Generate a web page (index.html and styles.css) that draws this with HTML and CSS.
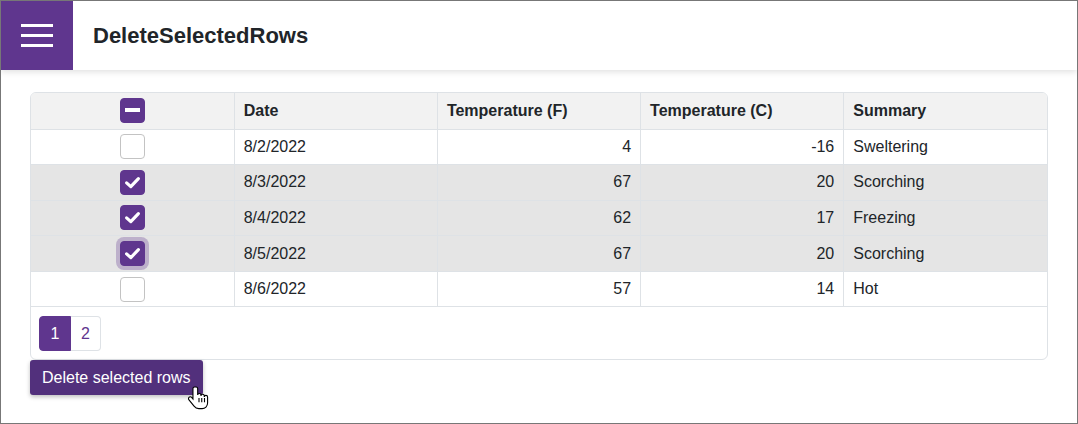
FILE: index.html
```html
<!DOCTYPE html>
<html>
<head>
<meta charset="utf-8">
<link rel="stylesheet" href="styles.css">
</head>
<body>
<div class="frame">
  <header class="topbar">
    <div class="menu-btn">
      <span class="bar"></span><span class="bar"></span><span class="bar"></span>
    </div>
    <h1 class="title">DeleteSelectedRows</h1>
  </header>
  <main class="content">
    <div class="grid">
      <table class="tbl">
        <colgroup><col><col><col><col><col></colgroup>
        <thead>
          <tr>
            <th class="c-sel"><span class="cb cb-on"><span class="dash"></span></span></th>
            <th>Date</th>
            <th>Temperature (F)</th>
            <th>Temperature (C)</th>
            <th>Summary</th>
          </tr>
        </thead>
        <tbody>
          <tr>
            <td class="c-sel"><span class="cb"></span></td>
            <td>8/2/2022</td><td class="num">4</td><td class="num">-16</td><td>Sweltering</td>
          </tr>
          <tr class="sel">
            <td class="c-sel"><span class="cb cb-on"><svg class="tick" viewBox="0 0 16 16"><path d="M3.5 8.3 L6.7 11.2 L12.5 5" /></svg></span></td>
            <td>8/3/2022</td><td class="num">67</td><td class="num">20</td><td>Scorching</td>
          </tr>
          <tr class="sel">
            <td class="c-sel"><span class="cb cb-on"><svg class="tick" viewBox="0 0 16 16"><path d="M3.5 8.3 L6.7 11.2 L12.5 5" /></svg></span></td>
            <td>8/4/2022</td><td class="num">62</td><td class="num">17</td><td>Freezing</td>
          </tr>
          <tr class="sel">
            <td class="c-sel"><span class="cb cb-on cb-focus"><svg class="tick" viewBox="0 0 16 16"><path d="M3.5 8.3 L6.7 11.2 L12.5 5" /></svg></span></td>
            <td>8/5/2022</td><td class="num">67</td><td class="num">20</td><td>Scorching</td>
          </tr>
          <tr>
            <td class="c-sel"><span class="cb"></span></td>
            <td>8/6/2022</td><td class="num">57</td><td class="num">14</td><td>Hot</td>
          </tr>
        </tbody>
      </table>
      <div class="pager">
        <span class="page active">1</span><span class="page">2</span>
      </div>
    </div>
    <div class="actions">
      <button class="del-btn">Delete selected rows</button>
      <svg class="cursor" viewBox="0 0 20 24" width="22" height="27">
        <path d="M6 1.5c-.9 0-1.5.7-1.5 1.5v9.5L3.3 11c-.7-.7-1.8-.7-2.4 0-.6.6-.6 1.5 0 2.2l4.6 5.8c1 1.3 2.5 2.2 4.3 2.2h3c2.8 0 5-2.2 5-5v-5.5c0-.8-.7-1.5-1.5-1.5s-1.5.7-1.5 1.5v-1c0-.8-.7-1.5-1.5-1.5s-1.5.7-1.5 1.5v-.8c0-.8-.7-1.5-1.5-1.5s-1.5.7-1.5 1.5V3c0-.8-.6-1.5-1.5-1.5z" fill="#fff" stroke="#000" stroke-width="1"/>
        <path d="M10 11.5v4M12.5 11.5v4M15 11.5v4" stroke="#000" stroke-width="1" fill="none"/>
      </svg>
    </div>
  </main>
</div>
</body>
</html>
```

FILE: styles.css
```css
* { box-sizing: border-box; }
html, body { margin: 0; padding: 0; background: #fff; }
body { font-family: "Liberation Sans", Arial, sans-serif; color: #212529; }

.frame {
  width: 1078px;
  height: 424px;
  border: 1px solid #777;
  overflow: hidden;
  background: #fff;
}

.topbar {
  height: 69px;
  display: flex;
  align-items: center;
  background: #fff;
  box-shadow: 0 2px 6px rgba(0,0,0,0.12);
  position: relative;
  z-index: 1;
}
.menu-btn {
  width: 72px;
  height: 69px;
  background: #5f368e;
  display: flex;
  flex-direction: column;
  justify-content: center;
  align-items: center;
  gap: 7px;
}
.menu-btn .bar {
  display: block;
  width: 32px;
  height: 3px;
  background: #fff;
}
.title {
  margin: 0 0 0 20px;
  font-size: 22px;
  font-weight: bold;
  color: #212529;
}

.content {
  padding: 22px 29px 0 29px;
}

.grid {
  border: 1px solid #dee2e6;
  border-radius: 6px;
  overflow: hidden;
  width: 1018px;
}
.tbl {
  width: 100%;
  border-collapse: collapse;
  table-layout: fixed;
  font-size: 16px;
}
.tbl th, .tbl td {
  border-right: 1px solid #dee2e6;
  border-bottom: 1px solid #dee2e6;
  padding: 0 9px;
  text-align: left;
  height: 35.6px;
  color: #212529;
}
.tbl th:last-child, .tbl td:last-child { border-right: none; }
.tbl thead th {
  background: #f2f2f2;
  font-weight: bold;
  height: 36px;
}
.tbl tr.sel td { background: #e5e5e5; }
.tbl .num { text-align: right; }
.tbl .c-sel { text-align: center; padding: 0; }

.cb {
  display: inline-block;
  width: 25px;
  height: 25px;
  border: 1px solid #c3c3c3;
  border-radius: 4px;
  background: #fff;
  vertical-align: middle;
  position: relative;
}
.cb-on {
  background: #5f368e;
  border-color: #5f368e;
}
.cb-focus {
  box-shadow: 0 0 0 4px rgba(95,54,142,0.3);
}
.dash {
  position: absolute;
  left: 4px;
  top: 9px;
  width: 15px;
  height: 4px;
  background: #fff;
}
.tick {
  position: absolute;
  left: 1px;
  top: 1px;
  width: 21px;
  height: 21px;
  fill: none;
  stroke: #fff;
  stroke-width: 2.4;
  stroke-linecap: round;
  stroke-linejoin: round;
}

.pager {
  display: flex;
  padding: 9px 8px 8px 8px;
  height: 52px;
}
.page {
  width: 31px;
  height: 35px;
  display: flex;
  align-items: center;
  justify-content: center;
  font-size: 16px;
  color: #5f368e;
  border: 1px solid #dee2e6;
  border-left: none;
}
.page:last-child { border-radius: 0 4px 4px 0; width: 30px; }
.page.active {
  background: #5f368e;
  border-color: #5f368e;
  color: #fff;
  border-radius: 4px 0 0 4px;
  border-left: 1px solid #5f368e;
  width: 32px;
}

.actions {
  position: relative;
}
.del-btn {
  font-family: "Liberation Sans", Arial, sans-serif;
  font-size: 16px;
  color: #fff;
  background: #52307c;
  border: none;
  border-radius: 3px;
  height: 35px;
  padding: 0 12px;
  box-shadow: 0 2px 4px rgba(0,0,0,0.25);
}
.cursor {
  position: absolute;
  left: 158px;
  top: 25px;
}
```
